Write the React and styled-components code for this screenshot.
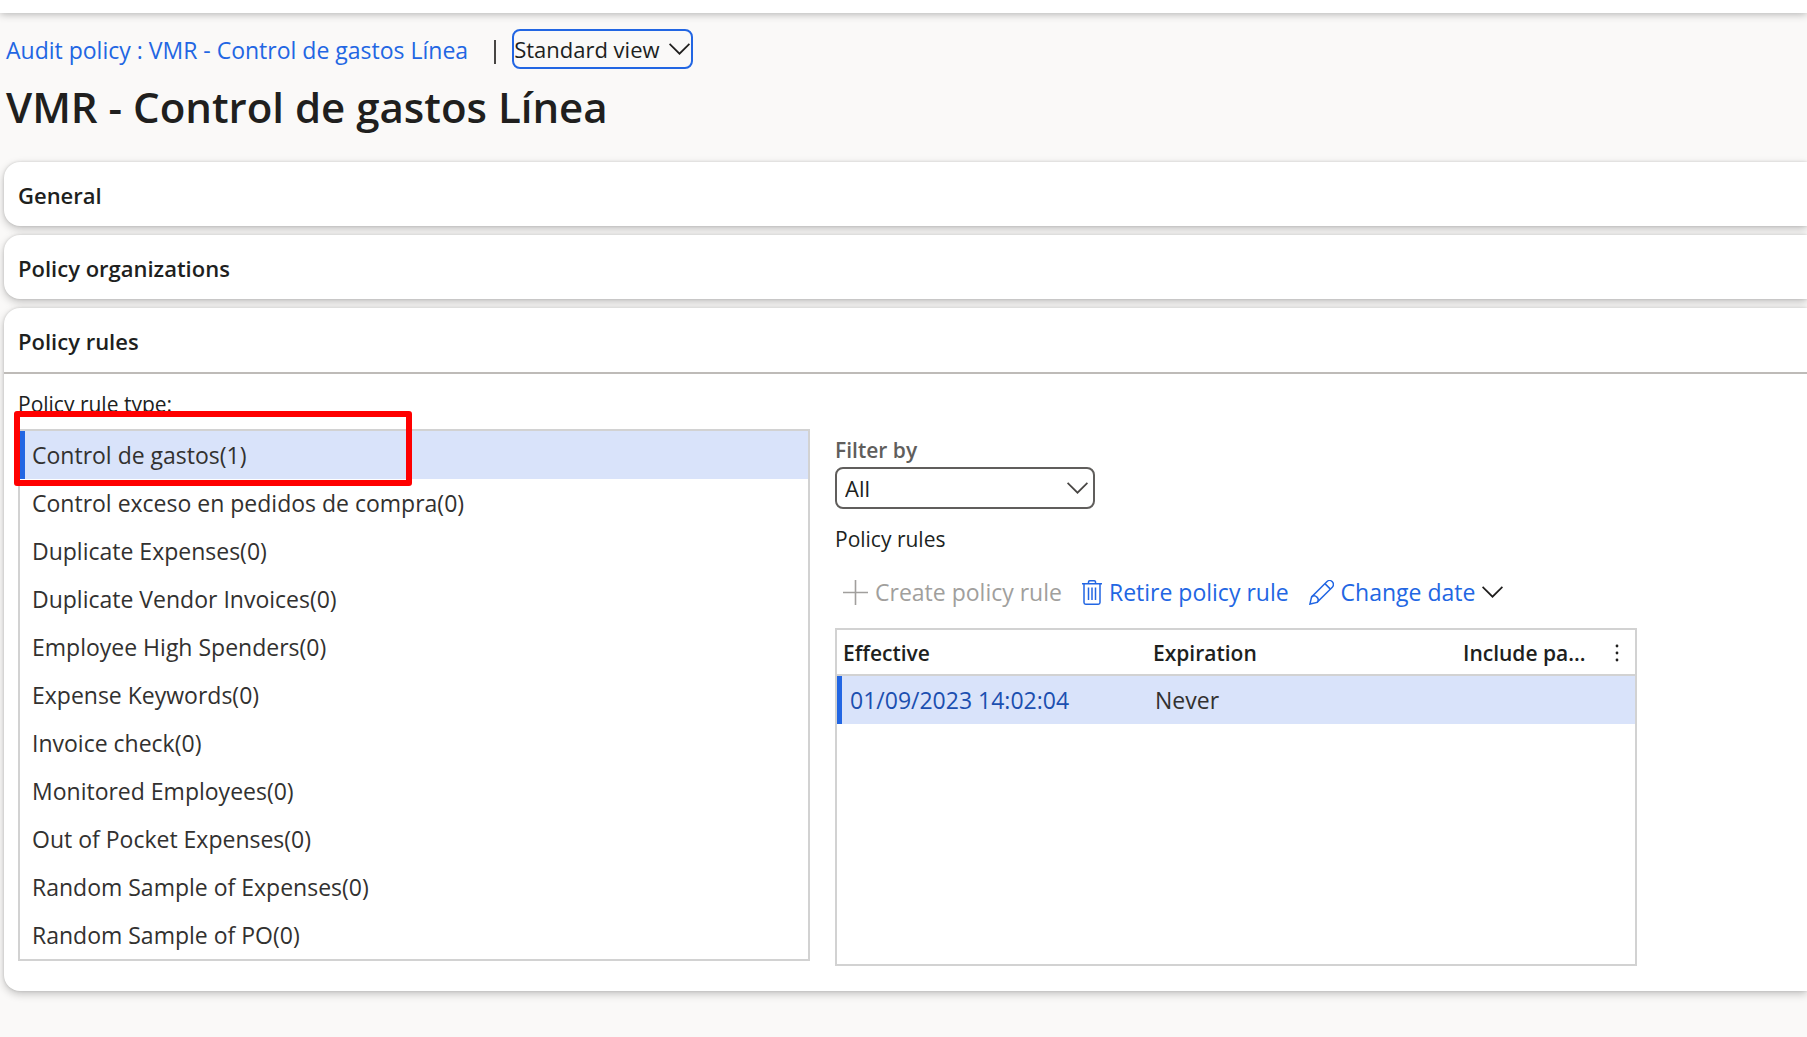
import React, { useState } from "react";
import styled, { createGlobalStyle } from "styled-components";

const GlobalStyle = createGlobalStyle`
  * {
    box-sizing: border-box;
  }

  body {
    margin: 0;
    background-color: #faf9f8;
    color: #201f1e;
    font-family: "Open Sans", "Noto Sans", sans-serif;
    font-size: 23px;
    line-height: 30px;
  }

  button,
  select {
    font: inherit;
    color: inherit;
  }
`;

const TopBar = styled.header`
  height: 13px;
  background-color: white;
  box-shadow: 0 1px 8px rgba(0, 0, 0, 0.3);
`;

const PageHead = styled.div`
  padding: 16px 6px 0;
`;

const Crumbs = styled.nav`
  display: flex;
  align-items: center;
  height: 40px;
`;

const CrumbLink = styled.a`
  padding-top: 2px;
  color: #2266e3;
  text-decoration: none;
`;

const Divider = styled.span`
  width: 2px;
  height: 24px;
  margin: 6px 16px 0 26px;
  background-color: #484644;
`;

const SelectBox = styled.div`
  position: relative;
  width: ${(props) => props.$width};
  height: ${(props) => props.$height};
`;

const Select = styled.select`
  appearance: none;
  width: 100%;
  height: 100%;
  padding: 0 ${(props) => props.$pad};
  border: 2px solid ${(props) => props.$border};
  border-radius: 8px;
  background-color: transparent;
  font-size: 22px;
`;

const SelectArrow = styled.span`
  position: absolute;
  top: 0;
  bottom: 0;
  right: ${(props) => props.$right};
  display: flex;
  align-items: center;
  pointer-events: none;
`;

const Title = styled.h1`
  margin: 8px 0 25px;
  font-size: 42px;
  line-height: 60px;
  font-weight: 600;
`;

const Sections = styled.main`
  display: grid;
  gap: 9px;
  padding: 0 0 40px 4px;
`;

const Card = styled.section`
  background-color: white;
  border-radius: 16px 0 0 16px;
  box-shadow: 0 3px 8px rgba(0, 0, 0, 0.22), 0 0 3px rgba(0, 0, 0, 0.14);
`;

const CardTitle = styled.h2`
  margin: 0;
  padding: 2px 14px 0;
  height: ${(props) => (props.$open ? "66px" : "64px")};
  border-bottom: ${(props) => (props.$open ? "2px solid #bebbb8" : "none")};
  font-size: 22px;
  line-height: 62px;
  font-weight: 600;
`;

const CardBody = styled.div`
  display: grid;
  grid-template-columns: 792fr 802fr 145fr;
  gap: 25px;
  padding: 15px 0 25px 14px;
`;

const Label = styled.div`
  font-size: 21px;
`;

const FilterLabel = styled.label`
  display: block;
  margin-bottom: 2px;
  font-size: 21px;
  font-weight: 600;
  color: #605e5c;
`;

const ListWrap = styled.div`
  position: relative;
  margin-top: 10px;
`;

const TypeList = styled.ul`
  margin: 0;
  padding: 0;
  list-style: none;
  border: 2px solid #d2d2d2;
`;

const TypeButton = styled.button`
  display: block;
  width: 100%;
  height: 48px;
  padding: 0 7px;
  border: none;
  border-left: 5px solid ${(props) => (props.$active ? "#2266e3" : "transparent")};
  background-color: ${(props) => (props.$active ? "#d9e3fa" : "transparent")};
  color: #323130;
  text-align: left;
  cursor: pointer;
`;

// red frame drawn over the first rule type
const Highlight = styled.div`
  position: absolute;
  top: -18px;
  left: -4px;
  width: 398px;
  height: 75px;
  border: 6px solid #ff0000;
  border-radius: 3px;
  pointer-events: none;
`;

const Rules = styled.div`
  display: flex;
  flex-direction: column;
  padding-top: 46px;
`;

const RulesLabel = styled(Label)`
  margin-top: 15px;
`;

const Toolbar = styled.div`
  display: flex;
  align-items: center;
  gap: 20px;
  height: 48px;
  margin: 14px 0 12px;
  padding-left: 8px;
`;

const ToolButton = styled.button`
  display: flex;
  align-items: center;
  gap: 7px;
  padding: 0;
  border: none;
  background: none;
  color: #2266e3;
  white-space: nowrap;

  &:disabled {
    color: #a19f9d;
  }
`;

const GridBox = styled.div`
  flex: 1;
  min-height: 338px;
  border: 2px solid #d2d2d2;
`;

const Table = styled.table`
  width: 100%;
  table-layout: fixed;
  border-collapse: separate;
  border-spacing: 0;
`;

const Th = styled.th`
  width: ${(props) => props.$width};
  height: 46px;
  padding: 2px 6px 0;
  border-bottom: 2px solid #d2d2d2;
  font-size: 21px;
  font-weight: 600;
  text-align: left;
  white-space: nowrap;
`;

const Td = styled.td`
  height: 48px;
  padding: 0 8px;
  background-color: #d9e3fa;
  color: #323130;

  &:first-child {
    border-left: 5px solid #2266e3;
  }
`;

const DateLink = styled.a`
  color: #1b4fb0;
  text-decoration: none;
`;

const MoreButton = styled.button`
  display: flex;
  padding: 0;
  border: none;
  background: none;
`;

const Chevron = ({ color = "#201f1e", width = 21 }) => (
  <svg width={width} height="12" viewBox="0 0 21 12" fill="none" stroke={color} strokeWidth="1.7">
    <path d="M0.6 0.8 10.5 10.7 20.4 0.8" />
  </svg>
);

const PlusIcon = () => (
  <svg width="25" height="25" viewBox="0 0 25 25" fill="none" stroke="currentColor" strokeWidth="1.6">
    <path d="M12.5 0v25M0 12.5h25" />
  </svg>
);

const TrashIcon = () => (
  <svg width="20" height="25" viewBox="0 0 20 25" fill="none" stroke="currentColor" strokeWidth="1.5">
    <path d="M0 3.7h20M6.5 3.5V2a1.2 1.2 0 0 1 1.2-1.2h4.6A1.2 1.2 0 0 1 13.5 2v1.5" />
    <path d="M2 3.7V22.5a1.7 1.7 0 0 0 1.7 1.7h12.6a1.7 1.7 0 0 0 1.7-1.7V3.7" />
    <path d="M6.500 7.5v12.5M10 7.5v12.5M13.5 7.5v12.5" />
  </svg>
);

const PencilIcon = () => (
  <svg width="25" height="25" viewBox="0 0 25 25" fill="none" stroke="currentColor" strokeWidth="1.5">
    <path d="M0.9 24.1 2.6 16.9 17.8 1.7a3.7 3.7 0 0 1 5.5 5.5L8.1 22.4Z" />
    <path d="M2.6 16.9a3.9 3.9 0 0 1 5.5 5.5M15.9 3.6l5.5 5.5" />
  </svg>
);

const DotsIcon = () => (
  <svg width="4" height="18" viewBox="0 0 4 18" fill="#201f1e">
    <circle cx="2" cy="2" r="1.4" />
    <circle cx="2" cy="9" r="1.4" />
    <circle cx="2" cy="16" r="1.4" />
  </svg>
);

const ruleTypes = [
  "Control de gastos(1)",
  "Control exceso en pedidos de compra(0)",
  "Duplicate Expenses(0)",
  "Duplicate Vendor Invoices(0)",
  "Employee High Spenders(0)",
  "Expense Keywords(0)",
  "Invoice check(0)",
  "Monitored Employees(0)",
  "Out of Pocket Expenses(0)",
  "Random Sample of Expenses(0)",
  "Random Sample of PO(0)",
];

export default function App() {
  const [active, setActive] = useState(0);

  return (
    <>
      <GlobalStyle />
      <TopBar />
      <PageHead>
        <Crumbs>
          <CrumbLink href="#policy">Audit policy : VMR - Control de gastos Línea</CrumbLink>
          <Divider />
          <SelectBox $width="181px" $height="40px">
            <Select $border="#2266e3" $pad="0" aria-label="View">
              <option>Standard view</option>
            </Select>
            <SelectArrow $right="3px">
              <Chevron />
            </SelectArrow>
          </SelectBox>
        </Crumbs>
        <Title>VMR - Control de gastos Línea</Title>
      </PageHead>
      <Sections>
        <Card>
          <CardTitle>General</CardTitle>
        </Card>
        <Card>
          <CardTitle>Policy organizations</CardTitle>
        </Card>
        <Card>
          <CardTitle $open>Policy rules</CardTitle>
          <CardBody>
            <div>
              <Label id="rule-type">Policy rule type:</Label>
              <ListWrap>
                <TypeList aria-labelledby="rule-type">
                  {ruleTypes.map((name, i) => (
                    <li key={name}>
                      <TypeButton $active={i === active} onClick={() => setActive(i)}>
                        {name}
                      </TypeButton>
                    </li>
                  ))}
                </TypeList>
                <Highlight />
              </ListWrap>
            </div>
            <Rules>
              <FilterLabel htmlFor="filter">Filter by</FilterLabel>
              <SelectBox $width="260px" $height="42px">
                <Select id="filter" $border="#605e5c" $pad="8px">
                  <option>All</option>
                </Select>
                <SelectArrow $right="6px">
                  <Chevron color="#484644" width={23} />
                </SelectArrow>
              </SelectBox>
              <RulesLabel>Policy rules</RulesLabel>
              <Toolbar>
                <ToolButton disabled>
                  <PlusIcon />
                  Create policy rule
                </ToolButton>
                <ToolButton>
                  <TrashIcon />
                  Retire policy rule
                </ToolButton>
                <ToolButton>
                  <PencilIcon />
                  Change date
                  <Chevron />
                </ToolButton>
              </Toolbar>
              <GridBox>
                <Table>
                  <thead>
                    <tr>
                      <Th $width="310px">Effective</Th>
                      <Th $width="310px">Expiration</Th>
                      <Th>Include pa...</Th>
                      <Th $width="26px">
                        <MoreButton aria-label="Grid options">
                          <DotsIcon />
                        </MoreButton>
                      </Th>
                    </tr>
                  </thead>
                  <tbody>
                    <tr>
                      <Td>
                        <DateLink href="#rule">01/09/2023 14:02:04</DateLink>
                      </Td>
                      <Td>Never</Td>
                      <Td />
                      <Td />
                    </tr>
                  </tbody>
                </Table>
              </GridBox>
            </Rules>
          </CardBody>
        </Card>
      </Sections>
    </>
  );
}
